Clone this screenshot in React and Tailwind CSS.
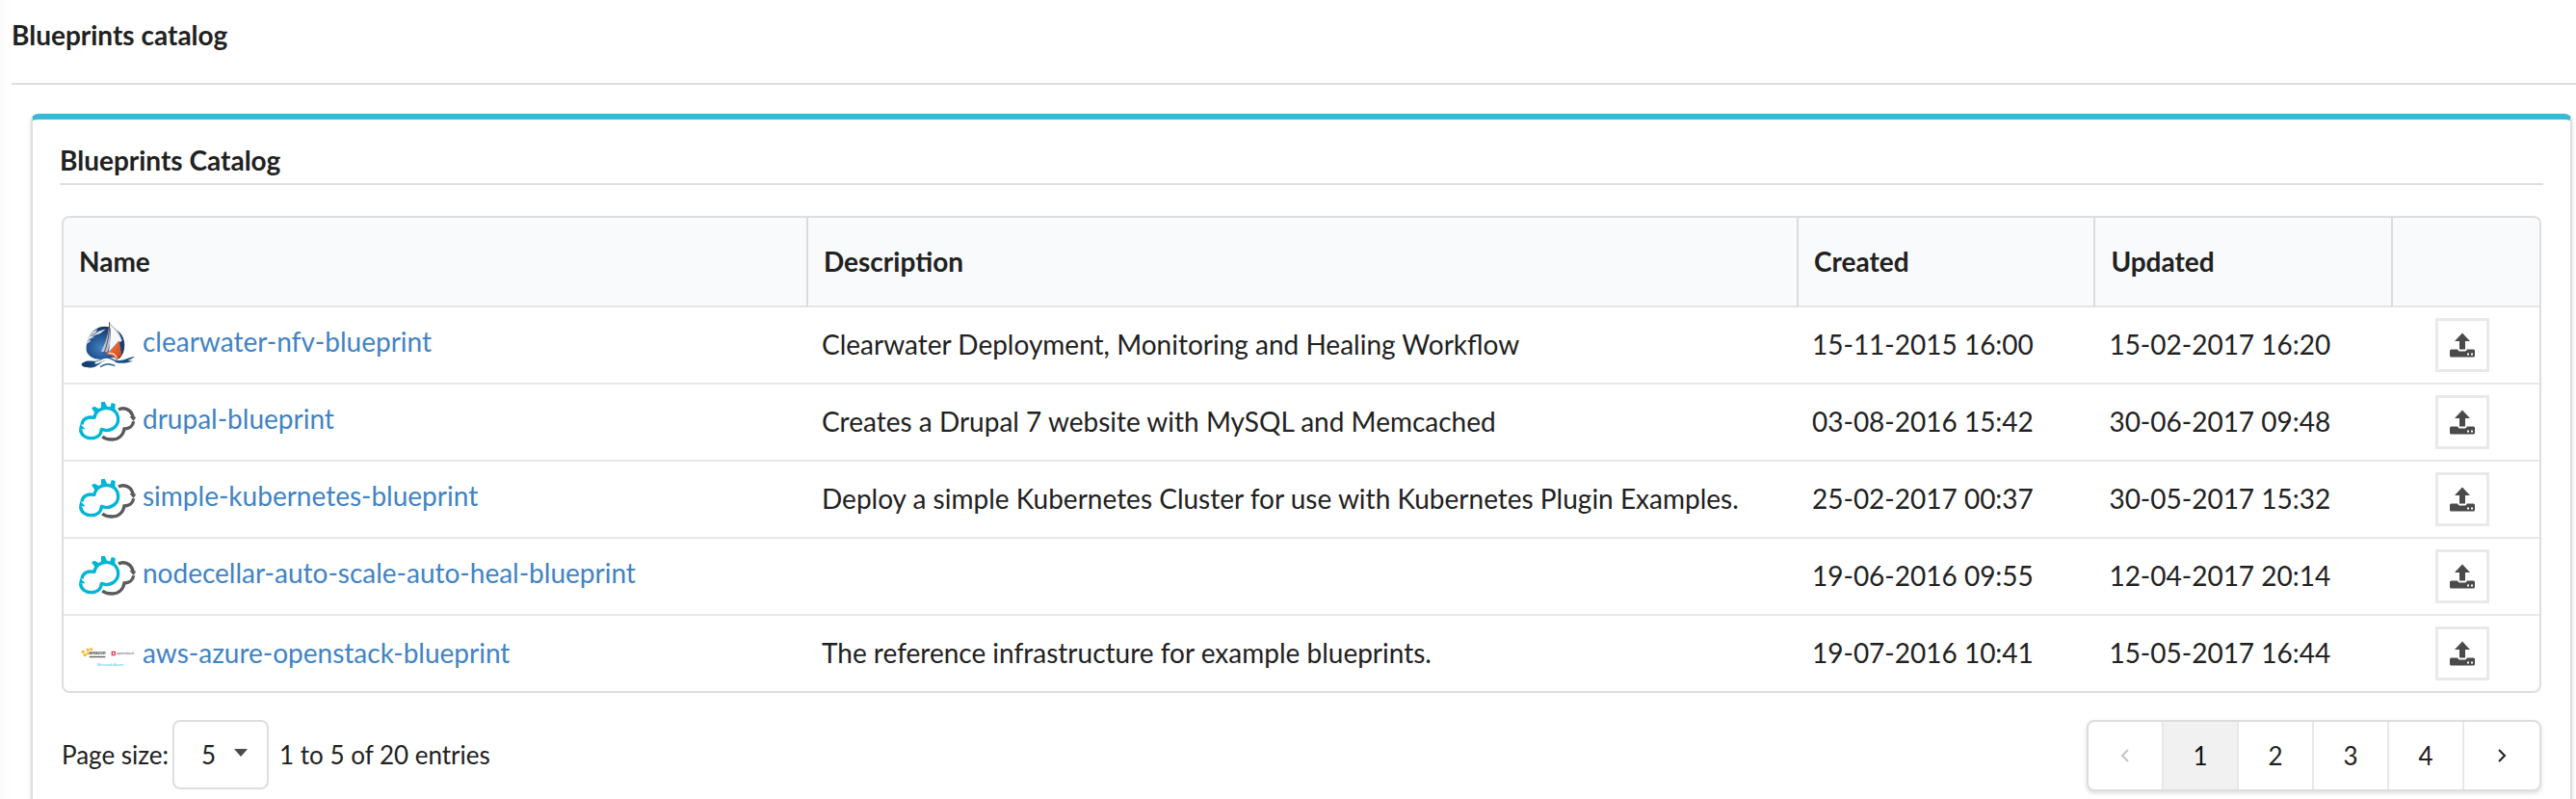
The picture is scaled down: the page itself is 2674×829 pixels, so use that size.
import React, { useState } from "react";

function SailboatLogo() {
  return (
    <svg viewBox="0 0 180 156" className="h-[52px] w-[60px] shrink-0" aria-hidden="true">
      <defs>
        <radialGradient id="globe" cx="0.4" cy="0.65" r="0.7">
          <stop offset="0" stopColor="#4583bf" />
          <stop offset="0.55" stopColor="#1f5290" />
          <stop offset="1" stopColor="#152d52" />
        </radialGradient>
        <linearGradient id="jib" x1="0" y1="0" x2="1" y2="1">
          <stop offset="0" stopColor="#f5a27c" />
          <stop offset="0.5" stopColor="#e4622f" />
          <stop offset="1" stopColor="#cf4517" />
        </linearGradient>
        <linearGradient id="wave" x1="0" y1="0" x2="1" y2="0">
          <stop offset="0" stopColor="#123a66" />
          <stop offset="0.5" stopColor="#1d5c94" />
          <stop offset="1" stopColor="#1b4a7c" />
        </linearGradient>
      </defs>
      <path d="M24 100C18 58 44 20 80 20c38 0 62 26 62 58 0 18-6 32-16 42-22-6-40-2-60 2-18 2-32-6-42-22Z" fill="url(#globe)" />
      <path d="M22 84c2-26 16-46 36-56l-6 10 32-10-18 14-24 8 6 4-16 6 4 6-12 8Z" fill="#dfe7ee" />
      <path d="M28 66l26-20M36 50l24-14" stroke="#5d7488" strokeWidth="3" fill="none" />
      <path d="M94 8c-2 34-10 62-26 90l20 2 10-30Z" fill="#c9d3dc" opacity="0.85" />
      <path d="M96 12c22 14 34 34 38 54l-14 4-28 32c6-28 8-60 4-90Z" fill="#f6f8fa" />
      <path d="M97 14c20 16 32 34 37 52" stroke="#8896a3" strokeWidth="3" fill="none" />
      <path d="M95 6c0 38-6 72-18 100" stroke="#6b4b45" strokeWidth="3" fill="none" />
      <path d="M124 64c4 18 8 34 8 48-6 0-10 6-12 14-10-10-20-18-36-20 14-12 28-24 40-42Z" fill="url(#jib)" />
      <path d="M92 104c12-2 20 2 26 14" stroke="#fbd9c8" strokeWidth="4" fill="none" />
      <path
        d="M8 136c14-12 28-8 40-8 18 0 20-12 40-12 16 0 20 10 36 10 18 0 30-10 50-12-8 6-12 8-22 12l16 2c-14 4-28 8-44 6-18-2-26-8-38-8-18 0-22 18-44 22-18 2-36-2-34-12Z"
        fill="url(#wave)"
      />
      <path d="M50 134c14 0 20-12 36-12 10 0 16 6 26 10M104 132c-14 0-20 8-30 12" stroke="#fff" strokeWidth="6" fill="none" />
      <path d="M66 146c10-4 16-12 30-8l16 4" stroke="#1d5c94" strokeWidth="4" fill="none" />
    </svg>
  );
}

function CloudLogo() {
  return (
    <svg viewBox="0 0 180 156" className="h-[52px] w-[60px] shrink-0" fill="none" aria-hidden="true">
      <path d="M123 39C138 30 160 38 166 55L169 64" stroke="#5a5a5c" strokeWidth="10" />
      <path d="M157 60L178 62L170 75Z" fill="#5a5a5c" />
      <path d="M170 76C168 90 156 99 141 99C138 118 124 132 104 132C92 132 80 130 73 123" stroke="#5a5a5c" strokeWidth="10" />
      <path d="M5 100C5 118 20 128 38 128C58 128 69 116 70 100C96 112 123 92 122 68C121 46 104 34 86 34C64 34 50 48 48 64C26 60 11 68 9 86" stroke="#00b5d6" strokeWidth="10" strokeLinejoin="round" />
      <path d="M0 100L4 84L20 100Z" fill="#00b5d6" />
      <path d="M39 34L49 29L62 37L50 50Z" fill="#00b5d6" />
      <path d="M69 16L80 14L88 31L69 34Z" fill="#00b5d6" />
      <path d="M101 18L113 21L112 40L97 34Z" fill="#00b5d6" />
    </svg>
  );
}

function VendorsLogo() {
  return (
    <svg viewBox="0 0 180 84" className="h-7 w-[60px] shrink-0" aria-hidden="true" fontFamily="Liberation Sans, sans-serif">
      <g fill="#f9b934">
        <path d="M8 32h9v9H8zM14 42h9v9h-9zM23 26h9v9h-9zM24 38h7v8h-7zM34 25h8v8h-8z" />
      </g>
      <text x="31" y="46" fontSize="14" fontWeight="700" fill="#3c3c3c">amazon</text>
      <path d="M32 50h50v5H32z" fill="#6b6b6b" />
      <path d="M103 37h9v10h-9z" stroke="#e5375b" strokeWidth="4" fill="none" />
      <text x="117" y="46" fontSize="12" fill="#6d4c55">openstack</text>
      <text x="56" y="80" fontSize="12" fill="#3cc2ee">Microsoft Azure</text>
    </svg>
  );
}

function UploadIcon() {
  return (
    <svg viewBox="0 0 26 26" className="size-[26px]" fill="#4a4a4a" aria-hidden="true">
      <path d="M13 0.5L21 9H16V17.5H10V9H5Z" />
      <path
        fillRule="evenodd"
        d="M1.5 17.5H8.2C8.6 19 9.5 19.6 11 19.6H15C16.5 19.6 17.4 19 17.8 17.5H24.5Q26 17.5 26 19V24Q26 25.5 24.5 25.5H1.5Q0 25.5 0 24V19Q0 17.5 1.5 17.5ZM18 21.5V23.5H20V21.5ZM22 21.5V23.5H24V21.5Z"
      />
    </svg>
  );
}

function Chevron({ left }) {
  return (
    <svg viewBox="0 0 10 16" className="h-4 w-[10px]" fill="none" stroke="currentColor" strokeWidth="2" aria-hidden="true">
      <path d={left ? "M8 2L2 8L8 14" : "M2 2L8 8L2 14"} />
    </svg>
  );
}

const blueprints = [
  { name: "clearwater-nfv-blueprint", Logo: SailboatLogo, description: "Clearwater Deployment, Monitoring and Healing Workflow", created: "15-11-2015 16:00", updated: "15-02-2017 16:20" },
  { name: "drupal-blueprint", Logo: CloudLogo, description: "Creates a Drupal 7 website with MySQL and Memcached", created: "03-08-2016 15:42", updated: "30-06-2017 09:48" },
  { name: "simple-kubernetes-blueprint", Logo: CloudLogo, description: "Deploy a simple Kubernetes Cluster for use with Kubernetes Plugin Examples.", created: "25-02-2017 00:37", updated: "30-05-2017 15:32" },
  { name: "nodecellar-auto-scale-auto-heal-blueprint", Logo: CloudLogo, description: "", created: "19-06-2016 09:55", updated: "12-04-2017 20:14" },
  { name: "aws-azure-openstack-blueprint", Logo: VendorsLogo, wide: true, description: "The reference infrastructure for example blueprints.", created: "19-07-2016 10:41", updated: "15-05-2017 16:44" },
];

const columns = [
  { label: "Name", width: "w-[30%]" },
  { label: "Description", width: "w-[40%]" },
  { label: "Created", width: "w-[12%]" },
  { label: "Updated", width: "w-[12%]" },
  { label: "", width: "w-[6%]" },
];

function BlueprintsTable() {
  return (
    <table className="w-full table-fixed border-separate border-spacing-0 overflow-hidden rounded-lg border-2 border-[#dededf] text-left">
      <thead>
        <tr className="bg-[#f9fafb]">
          {columns.map((c, i) => (
            <th
              key={i}
              scope="col"
              aria-label={c.label || "Actions"}
              className={`${c.width} h-[93px] border-b-2 border-b-[#e4e5e6] px-4 pb-0.5 font-bold ${i ? "border-l-2 border-l-[#dadbdc]" : ""}`}
            >
              {c.label}
            </th>
          ))}
        </tr>
      </thead>
      <tbody className="[&>tr:not(:last-child)>td]:border-b-2 [&>tr>td]:border-[#e8e8e8]">
        {blueprints.map(({ name, Logo, wide, description, created, updated }) => (
          <tr key={name} className="h-20 last:h-[78px]">
            <td className="px-4">
              <div className="flex items-center gap-[6px]">
                <Logo />
                <a href={`#${name}`} className={`text-[#4183c4] ${wide ? "pb-0.5" : "pb-2"}`}>{name}</a>
              </div>
            </td>
            <td className="px-4 pb-0.5">{description}</td>
            <td className="px-4 pb-0.5">{created}</td>
            <td className="px-4 pb-0.5">{updated}</td>
            <td className="px-4">
              <div className="flex justify-center pr-1.5">
                <button type="button" aria-label={`Upload ${name}`} className="flex size-14 items-center justify-center border-3 border-[#e9e9e9] bg-white">
                  <UploadIcon />
                </button>
              </div>
            </td>
          </tr>
        ))}
      </tbody>
    </table>
  );
}

function Pagination({ page, onChange }) {
  const item = "flex w-[78px] items-center justify-center border-r-2 border-[#e8e8e8]";
  return (
    <nav aria-label="Pages" className="flex h-[74px] overflow-hidden rounded-lg border-2 border-[#dededf] bg-white shadow-[0_2px_4px_rgba(34,36,38,0.15)]">
      <button type="button" aria-label="Previous page" disabled={page === 1} className={`${item} text-black/85 disabled:text-[#c4c4c4]`} onClick={() => onChange(page - 1)}>
        <Chevron left />
      </button>
      {[1, 2, 3, 4].map((n) => (
        <button
          key={n}
          type="button"
          aria-current={n === page ? "page" : undefined}
          className={n === page ? `${item} bg-[#f1f1f1] text-black/95` : item}
          onClick={() => onChange(n)}
        >
          {n}
        </button>
      ))}
      <button type="button" aria-label="Next page" disabled={page === 4} className="flex w-[78px] items-center justify-center disabled:text-[#c4c4c4]" onClick={() => onChange(page + 1)}>
        <Chevron />
      </button>
    </nav>
  );
}

export default function App() {
  const [page, setPage] = useState(1);
  return (
    <div className="flex min-h-screen flex-col bg-gradient-to-r from-[#fafafa] from-0% to-white to-[12px] pl-3 font-[Lato,sans-serif] text-[28px] leading-9 text-[#212121]">
      <header className="border-b-2 border-[#dededf] pt-[18px] pb-8">
        <h1 className="font-bold">Blueprints catalog</h1>
      </header>
      <main className="mt-[30px] mr-1 ml-5 flex flex-1 flex-col overflow-clip rounded-t-lg border-x-2 border-t-6 border-[#dededf] border-t-[#3ab9d6] bg-white px-7 pb-2 shadow-[0_2px_4px_rgba(34,36,38,0.15)]">
        <h2 className="border-b-2 border-[#dededf] pt-6 pb-1.5 font-bold">Blueprints Catalog</h2>
        <div className="mt-8 px-0.5">
          <BlueprintsTable />
          <div className="mt-7 flex items-start justify-between text-[26px]">
            <div className="flex items-center">
              <label htmlFor="page-size">Page size:</label>
              <div className="relative ml-1">
                <select id="page-size" defaultValue="5" className="block h-[72px] w-[100px] appearance-none rounded-lg border-2 border-[#dededf] bg-white pl-7">
                  <option>5</option>
                  <option>10</option>
                  <option>25</option>
                </select>
                <svg viewBox="0 0 14 8" className="pointer-events-none absolute top-[30px] right-[22px] h-2 w-[14px]" fill="#4a4a4a" aria-hidden="true">
                  <path d="M0 0H14L7 8Z" />
                </svg>
              </div>
              <span className="ml-[11px]">1 to 5 of 20 entries</span>
            </div>
            <Pagination page={page} onChange={setPage} />
          </div>
        </div>
      </main>
    </div>
  );
}
